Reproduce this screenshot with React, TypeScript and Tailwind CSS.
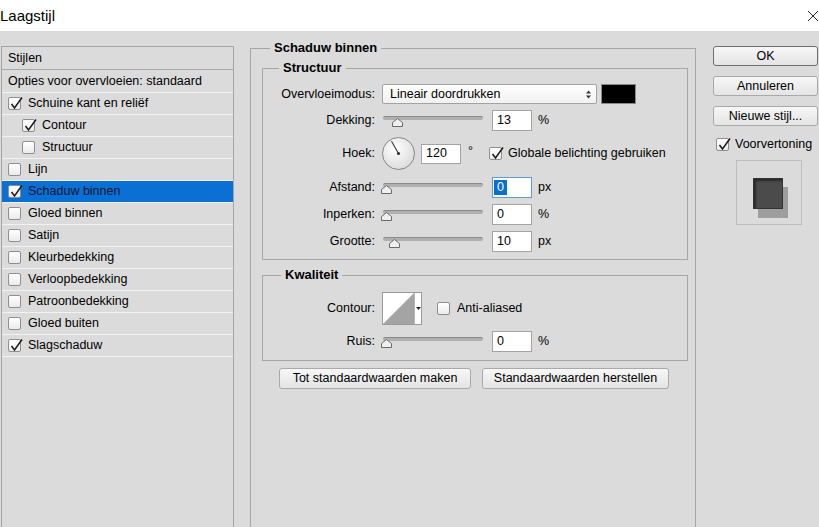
import type { ReactNode } from 'react'

const styles = [
  { label: 'Schuine kant en reliëf', on: true },
  { label: 'Contour', on: true, sub: true },
  { label: 'Structuur', sub: true },
  { label: 'Lijn' },
  { label: 'Schaduw binnen', on: true, active: true },
  { label: 'Gloed binnen' },
  { label: 'Satijn' },
  { label: 'Kleurbedekking' },
  { label: 'Verloopbedekking' },
  { label: 'Patroonbedekking' },
  { label: 'Gloed buiten' },
  { label: 'Slagschaduw', on: true },
]

function Check({ on }: { on?: boolean }) {
  return (
    <span className="relative inline-block h-[13px] w-[13px] shrink-0 rounded-[2px] border border-[#8e8e8e] bg-gradient-to-b from-white to-[#ebebeb]">
      {on && (
        <svg className="absolute -left-px -top-px overflow-visible" width="15" height="15" viewBox="0 0 15 15">
          <path d="M3.5 7 L6.5 11 L14 0.5" fill="none" stroke="#1a1a1a" strokeWidth="1.5" />
        </svg>
      )}
    </span>
  )
}

function Btn({ children, className = '' }: { children: ReactNode; className?: string }) {
  return (
    <button className={`flex items-center justify-center rounded-[3px] border bg-gradient-to-b from-[#f7f7f7] to-[#e4e4e4] text-black ${className}`}>
      {children}
    </button>
  )
}

function Slider({ thumb }: { thumb: string }) {
  return (
    <div className="relative ml-px h-[21px] w-[100px] shrink-0">
      <div className="absolute left-0 right-0 top-[6px] h-[4px] rounded-full border-t border-[#8a8a8a] bg-[#b0b0b0]" />
      <svg className={`absolute top-[8px] ${thumb}`} width="11" height="9" viewBox="0 0 11 9">
        <path d="M0.5 8.5 V4.5 L5.5 0.5 L10.5 4.5 V8.5 Z" fill="#efefef" stroke="#6a6a6a" />
      </svg>
    </div>
  )
}

function Field({ value, focused }: { value: string; focused?: boolean }) {
  return (
    <div
      className={`ml-[9px] flex h-[21px] w-[40px] shrink-0 items-center border bg-white ${
        focused ? 'border-[#5c9ad8] pl-px' : 'border-[#a3a3a3] pl-[4px]'
      }`}
    >
      {focused ? <span className="inline-block bg-[#0a6fd3] px-[3px] leading-[15px] text-white">{value}</span> : value}
    </div>
  )
}

function Row({ label, children, h = 'h-[21px]' }: { label: string; children: ReactNode; h?: string }) {
  return (
    <div className={`flex items-center ${h}`}>
      <div className="w-[112px] shrink-0 text-right">{label}</div>
      <div className="ml-[7px] flex items-center">{children}</div>
    </div>
  )
}

export default function App() {
  return (
    <div className="flex h-[527px] w-[819px] flex-col overflow-hidden bg-[#dbdbdb] font-['Liberation_Sans',Arial,sans-serif] text-[12.5px] text-black">
      <div className="flex h-[31px] shrink-0 items-center justify-between bg-white">
        <span className="text-[15px] leading-none">Laagstijl</span>
        <svg className="mr-[1px]" width="10" height="10" viewBox="0 0 10 10">
          <path d="M0 0 L10 10 M10 0 L0 10" stroke="#222" strokeWidth="1" />
        </svg>
      </div>

      <div className="flex flex-1 items-start">
        {/* stijlenlijst */}
        <div className="ml-px mt-[15px] w-[233px] self-stretch border-x border-t border-[#a4a4a4]">
          <div className="flex h-[23px] items-center border-b border-[#a8a8a8] pl-[6px]">Stijlen</div>
          <div className="flex h-[23px] items-center border-b border-[#f2f2f2] pl-[6px]">Opties voor overvloeien: standaard</div>
          {styles.map((s) => (
            <div
              key={s.label}
              className={`flex h-[22px] items-center gap-[7px] border-b border-[#f2f2f2] ${s.sub ? 'pl-[20px]' : 'pl-[6px]'} ${
                s.active ? 'bg-[#0b70d4] text-[#0a1630]' : ''
              }`}
            >
              <Check on={s.on} />
              <span>{s.label}</span>
            </div>
          ))}
        </div>

        {/* instellingen */}
        <fieldset className="ml-[16px] mt-[10px] w-[446px] self-stretch border border-b-0 border-[#a6a6a6]">
          <legend className="ml-[19px] px-[4px] text-[13px] font-bold leading-[14px]">Schaduw binnen</legend>

          <fieldset className="ml-[11px] mt-[6px] w-[426px] border border-[#a6a6a6] pb-[7px] pt-[9px]">
            <legend className="ml-[16px] px-[4px] text-[13px] font-bold leading-[14px]">Structuur</legend>
            <div className="flex flex-col">
              <Row label="Overvloeimodus:" h="h-[20px]">
                <div className="flex h-[20px] w-[215px] items-center justify-between rounded-[2px] border border-[#a3a3a3] bg-gradient-to-b from-white to-[#f1f1f1] pl-[7px] pr-[5px]">
                  <span>Lineair doordrukken</span>
                  <svg width="5" height="9" viewBox="0 0 5 9">
                    <path d="M0 3.5 L2.5 0.5 L5 3.5 Z M0 5.5 L2.5 8.5 L5 5.5 Z" fill="#333" />
                  </svg>
                </div>
                <div className="ml-[4px] h-[20px] w-[35px] border border-[#8a8a8a] bg-black" />
              </Row>
              <div className="mt-[6px]">
                <Row label="Dekking:">
                  <Slider thumb="left-[9px]" />
                  <Field value="13" />
                  <span className="ml-[6px]">%</span>
                </Row>
              </div>
              <div className="mt-[6px]">
                <Row label="Hoek:" h="h-[33px]">
                  <svg width="33" height="33" viewBox="0 0 33 33">
                    <defs>
                      <radialGradient id="dial" cx="0.4" cy="0.35" r="0.7">
                        <stop offset="0" stopColor="#ffffff" />
                        <stop offset="1" stopColor="#dadada" />
                      </radialGradient>
                    </defs>
                    <circle cx="16.5" cy="16.5" r="16" fill="url(#dial)" stroke="#858585" />
                    <line x1="16.5" y1="16.5" x2="9.5" y2="4.3" stroke="#3a3a3a" strokeWidth="1.1" />
                    <circle cx="16.5" cy="16.5" r="1.6" fill="#333" />
                  </svg>
                  <div className="ml-[6px] flex h-[20px] w-[40px] items-center border border-[#a3a3a3] bg-white pl-[4px]">120</div>
                  <span className="ml-[7px] -mt-[5px]">°</span>
                  <span className="ml-[16px] flex items-center gap-[6px]">
                    <Check on />
                    <span>Globale belichting gebruiken</span>
                  </span>
                </Row>
              </div>
              <div className="mt-[7px]">
                <Row label="Afstand:">
                  <Slider thumb="left-[-2px]" />
                  <Field value="0" focused />
                  <span className="ml-[6px]">px</span>
                </Row>
              </div>
              <div className="mt-[6px]">
                <Row label="Inperken:">
                  <Slider thumb="left-[-2px]" />
                  <Field value="0" />
                  <span className="ml-[6px]">%</span>
                </Row>
              </div>
              <div className="mt-[6px]">
                <Row label="Grootte:">
                  <Slider thumb="left-[6px]" />
                  <Field value="10" />
                  <span className="ml-[6px]">px</span>
                </Row>
              </div>
            </div>
          </fieldset>

          <fieldset className="ml-[11px] mt-[8px] w-[426px] border border-[#a6a6a6] pb-[8px] pt-[10px]">
            <legend className="ml-[18px] px-[4px] text-[13px] font-bold leading-[14px]">Kwaliteit</legend>
            <Row label="Contour:" h="h-[33px]">
              <div className="flex h-[33px] border border-[#9a9a9a] bg-white">
                <svg width="31" height="31" viewBox="0 0 31 31">
                  <path d="M0 31 L31 0 L31 31 Z" fill="#a4a4a4" />
                </svg>
                <div className="flex w-[7px] items-center justify-center border-l border-[#b5b5b5]">
                  <svg width="5" height="3" viewBox="0 0 5 3">
                    <path d="M0 0 L5 0 L2.5 3 Z" fill="#222" />
                  </svg>
                </div>
              </div>
              <span className="ml-[15px] flex items-center gap-[7px]">
                <Check />
                <span>Anti-aliased</span>
              </span>
            </Row>
            <div className="mt-[6px]">
              <Row label="Ruis:">
                <Slider thumb="left-[-2px]" />
                <Field value="0" />
                <span className="ml-[6px]">%</span>
              </Row>
            </div>
          </fieldset>

          <div className="ml-[28px] mt-[7px] flex gap-[11px]">
            <Btn className="h-[21px] w-[192px] border-[#a9a9a9]">Tot standaardwaarden maken</Btn>
            <Btn className="h-[21px] w-[187px] border-[#a9a9a9]">Standaardwaarden herstellen</Btn>
          </div>
        </fieldset>

        {/* knoppen */}
        <div className="ml-[17px] mt-[15px] flex w-[105px] flex-col">
          <Btn className="h-[20px] border-[#6f6f6f]">OK</Btn>
          <Btn className="mt-[10px] h-[20px] border-[#a9a9a9]">Annuleren</Btn>
          <Btn className="mt-[10px] h-[20px] border-[#a9a9a9]">Nieuwe stijl...</Btn>
          <div className="ml-[3px] mt-[11px] flex h-[14px] items-center gap-[6px]">
            <Check on />
            <span>Voorvertoning</span>
          </div>
          <div className="ml-[23px] mt-[9px] h-[65px] w-[66px] border border-[#bdbdbd] pl-[16px] pt-[17px]">
            <div className="h-[31px] w-[30px] border border-[#333] bg-[#4b4b4b] shadow-[inset_2px_2px_2px_rgba(0,0,0,0.45),5px_9px_0_#9e9e9e]" />
          </div>
        </div>
      </div>
    </div>
  )
}
